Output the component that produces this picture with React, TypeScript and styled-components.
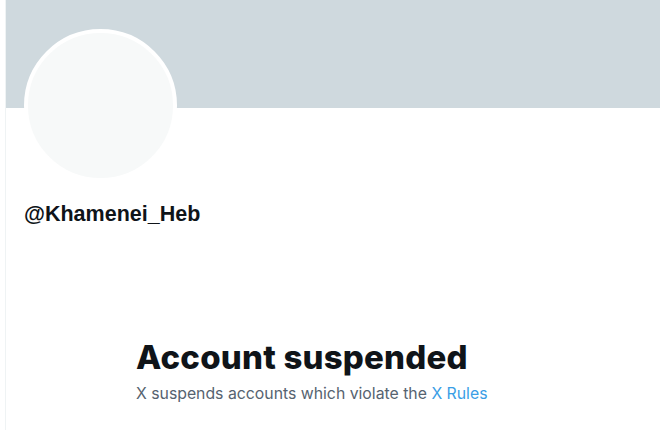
import styled, { createGlobalStyle } from "styled-components";

const GlobalStyle = createGlobalStyle`
  html, body {
    margin: 0;
    padding: 0;
    background: #ffffff;
  }

  body {
    font-family: Inter, "Liberation Sans", Arial, sans-serif;
    color: #0f1419;
  }
`;

const App = () => {
  return (
    <>
      <GlobalStyle />
      <Page>
        <Gutter />
        <Main>
          <Banner />
          <Avatar />
          <Handle>@Khamenei_Heb</Handle>
          <Notice>
            <Title>Account suspended</Title>
            <Message>
              X suspends accounts which violate the <RulesLink href="#">X Rules</RulesLink>
            </Message>
          </Notice>
        </Main>
      </Page>
    </>
  );
};

export default App;

const Page = styled.div`
  display: flex;
  width: 660px;
  height: 430px;
  overflow: hidden;
`;

const Gutter = styled.div`
  width: 5px;
  flex-shrink: 0;
  border-right: 1px solid #eff3f4;
`;

const Main = styled.div`
  flex: 1;
  display: flex;
  flex-direction: column;
`;

const Banner = styled.div`
  height: 108px;
  background: #cfd9de;
`;

const Avatar = styled.div`
  width: 145px;
  height: 145px;
  margin: -79px 0 0 18px;
  border: 4px solid #ffffff;
  border-radius: 50%;
  background: #f7f9f9;
`;

const Handle = styled.div`
  margin: 20px 0 0 18px;
  font-family: "Liberation Sans", Arial, sans-serif;
  font-size: 21.5px;
  font-weight: 700;
  line-height: 24px;
  color: #0f1419;
`;

const Notice = styled.div`
  display: flex;
  flex-direction: column;
  gap: 7px;
  margin: 111px 0 0 130px;
`;

const Title = styled.div`
  font-family: Inter, sans-serif;
  font-size: 33px;
  font-weight: 800;
  line-height: 40px;
  letter-spacing: 0.2px;
  color: #0f1419;
`;

const Message = styled.div`
  font-family: Inter, sans-serif;
  font-size: 15.8px;
  line-height: 20px;
  color: #566370;
`;

const RulesLink = styled.a`
  color: #3a9ee6;
  text-decoration: none;
`;
